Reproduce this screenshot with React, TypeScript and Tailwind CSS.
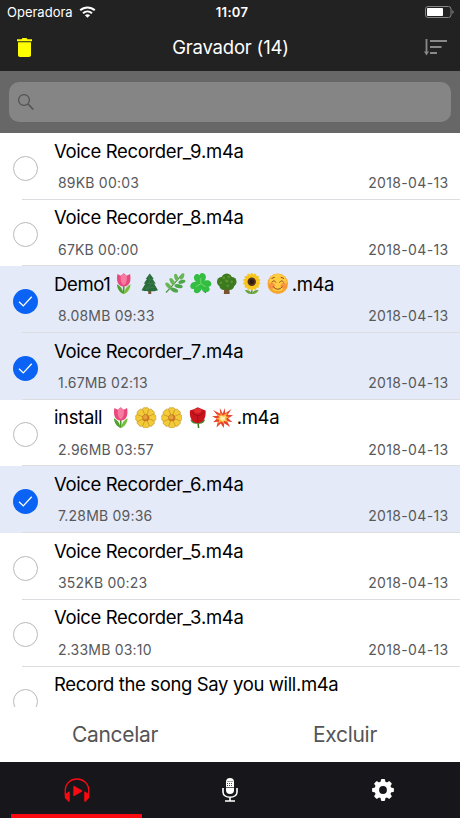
import clsx from 'clsx';
import React from 'react';

type EmojiName =
  | 'tulip' | 'evergreen' | 'herb' | 'shamrock' | 'tree' | 'sunflower'
  | 'smile' | 'blossom' | 'rose' | 'boom';

type Recording = {
  name: string;
  emojis?: EmojiName[];
  ext: string;
  details?: string;
  date?: string;
  selected?: boolean;
};

const recordings: Recording[] = [
  { name: 'Voice Recorder_9', ext: '.m4a', details: '89KB 00:03', date: '2018-04-13' },
  { name: 'Voice Recorder_8', ext: '.m4a', details: '67KB 00:00', date: '2018-04-13' },
  {
    name: 'Demo1',
    emojis: ['tulip', 'evergreen', 'herb', 'shamrock', 'tree', 'sunflower', 'smile'],
    ext: '.m4a',
    details: '8.08MB 09:33',
    date: '2018-04-13',
    selected: true,
  },
  { name: 'Voice Recorder_7', ext: '.m4a', details: '1.67MB 02:13', date: '2018-04-13', selected: true },
  {
    name: 'install ',
    emojis: ['tulip', 'blossom', 'blossom', 'rose', 'boom'],
    ext: '.m4a',
    details: '2.96MB 03:57',
    date: '2018-04-13',
  },
  { name: 'Voice Recorder_6', ext: '.m4a', details: '7.28MB 09:36', date: '2018-04-13', selected: true },
  { name: 'Voice Recorder_5', ext: '.m4a', details: '352KB 00:23', date: '2018-04-13' },
  { name: 'Voice Recorder_3', ext: '.m4a', details: '2.33MB 03:10', date: '2018-04-13' },
  { name: 'Record the song Say you will', ext: '.m4a' },
];

const around = (count: number) => Array.from({ length: count }, (_, i) => (i * 360) / count);

const emojiArt: Record<EmojiName, React.ReactNode> = {
  tulip: (
    <>
      <path d="M11 11v10" stroke="#4c9a2a" strokeWidth="1.6" />
      <path d="M11 21.5C7 20 4.5 17 4 11.5c3.500 1.500 6 5 7 10z" fill="#4fa02f" />
      <path d="M11 21.500c4-1.500 6.500-4.500 7-10-3.500 1.500-6 5-7 10z" fill="#78bd3c" />
      <path d="M4.500 1l3.500 1.800L11 .3l3 2.500L17.500 1c1 6 .5 12.500-6.500 12.800C4 13.500 3.500 7 4.500 1z" fill="#e8487c" />
      <path d="M8 3c-.8 4 .5 8 3 9.500C13.500 11 14.800 7 14 3l-3-2.500z" fill="#f77ba3" />
    </>
  ),
  evergreen: (
    <>
      <path d="M9.500 17h3v4.500h-3z" fill="#795032" />
      <path d="M11 .5l4.200 5.700-1.500-.2 3.500 5-1.800-.3 4 7c-4 1.600-12.800 1.600-16.800 0l4-7-1.800.3 3.500-5-1.500.2z" fill="#286b3c" />
      <path d="M11 2l-1 5 3-1-4 5 6-1-8 6 10-2" fill="none" stroke="#3f8048" strokeWidth=".8" />
    </>
  ),
  herb: (
    <>
      <path d="M2 20C7 15 12 9 18 2" fill="none" stroke="#4d9642" strokeWidth="1.300" />
      <g fill="#69b657">
        <ellipse cx="18.500" cy="3.500" rx="1.900" ry="3.500" transform="rotate(25 18.500 3.500)" />
        <ellipse cx="12.500" cy="4.500" rx="1.900" ry="3.800" transform="rotate(-15 12.500 4.500)" />
        <ellipse cx="8.300" cy="8.700" rx="2" ry="4" transform="rotate(-30 8.300 8.700)" />
        <ellipse cx="4.500" cy="13" rx="2" ry="4" transform="rotate(-42 4.500 13)" />
      </g>
      <g fill="#4da649">
        <ellipse cx="18.300" cy="9" rx="1.900" ry="3.700" transform="rotate(75 18.300 9)" />
        <ellipse cx="15" cy="13.500" rx="2" ry="4.200" transform="rotate(100 15 13.500)" />
        <ellipse cx="10.500" cy="17.500" rx="2" ry="4.200" transform="rotate(112 10.500 17.500)" />
      </g>
    </>
  ),
  shamrock: (
    <>
      <path d="M10.500 11c1 4 3 7 6 9" fill="none" stroke="#219c35" strokeWidth="1.800" />
      {[-8, 112, 232].map((angle) => (
        <path
          key={angle}
          transform={`rotate(${angle} 11 11)`}
          d="M11 12C6 9.500 3.500 5 5.700 2 7.500-.3 10 .5 11 2.500 12-.5 15-.3 16.500 2 18.500 5 16 9.500 11 12z"
          fill="#33bd43"
        />
      ))}
      <path d="M11 11V5M11 11l5 3M11 11l-5 3" stroke="#83df6d" strokeWidth=".8" />
    </>
  ),
  tree: (
    <>
      <path d="M8.500 14h5l.5 7.500H8z" fill="#775431" />
      <g fill="#3b7a1f">
        <circle cx="11" cy="6" r="5.500" />
        <circle cx="6" cy="9" r="5" />
        <circle cx="16" cy="9" r="5" />
        <circle cx="8" cy="13" r="4.500" />
        <circle cx="14" cy="13" r="4.500" />
      </g>
      <g fill="#5c902d">
        <circle cx="8" cy="5" r="1.500" />
        <circle cx="13" cy="4" r="1.500" />
        <circle cx="11" cy="8" r="1.700" />
        <circle cx="5" cy="10" r="1.400" />
        <circle cx="16" cy="9" r="1.400" />
        <circle cx="12" cy="13" r="1.300" />
      </g>
    </>
  ),
  sunflower: (
    <>
      <path d="M11 13v8.500" stroke="#549539" strokeWidth="1.600" />
      <path d="M11 21.500c-4 .3-6-1.500-7-4 4-.3 6 1 7 4zM11 21.500c4 .3 6-1.500 7-4-4-.3-6 1-7 4z" fill="#6aa63d" />
      {around(14).map((angle) => (
        <ellipse key={angle} cx="11" cy="3.200" rx="1.700" ry="3.200" fill="#f8c51d" transform={`rotate(${angle} 11 9)`} />
      ))}
      <circle cx="11" cy="9" r="4.300" fill="#54301a" />
      <circle cx="11" cy="9" r="2.300" fill="#301b12" />
    </>
  ),
  smile: (
    <>
      <circle cx="11" cy="11" r="10.500" fill="#f6a52d" />
      <circle cx="11" cy="9.800" r="9" fill="#ffcc42" />
      <circle cx="5" cy="13" r="3" fill="#f58243" opacity=".75" />
      <circle cx="17" cy="13" r="3" fill="#f58243" opacity=".75" />
      <path d="M5 9.500c1-2 3-2 4 0M13 9.500c1-2 3-2 4 0M6.500 14c2 3.500 7 3.500 9 0M5 5.500l2.500-1M17 5.500l-2.500-1" fill="none" stroke="#83491e" strokeWidth="1" strokeLinecap="round" />
    </>
  ),
  blossom: (
    <>
      {around(8).map((angle) => (
        <path
          key={angle}
          d="M11 11L7.500 3.500C7.500.5 10 .2 11 1c1-.8 3.500-.5 3.500 2.500z"
          fill="#f3ca37"
          stroke="#b98a22"
          strokeWidth=".6"
          transform={`rotate(${angle} 11 11)`}
        />
      ))}
      <circle cx="11" cy="11" r="3.600" fill="#c9761e" />
      <circle cx="10.500" cy="10.500" r="2.300" fill="#e5a33c" />
    </>
  ),
  rose: (
    <>
      <path d="M11 13c.5 3 .3 6 1 8.500" fill="none" stroke="#3c7c2d" strokeWidth="1.600" />
      <path d="M11 17c-4 1-6.500-1-7.500-4 4-.5 6.500.5 7.500 4zM11 17c4 1 6.500-1 7.500-4-4-.5-6.500.5-7.500 4z" fill="#478a31" />
      <path d="M3 3.500L7.500 2 11 .2 15 2l4 1.500c.5 6-1 12.500-8 13C4 16 2.500 9.500 3 3.500z" fill="#c9141d" />
      <path d="M7 3.500c2-3 6-3 8 0-1 4-7 4-8 0z" fill="#e32e31" />
      <path d="M5 5c3 5 9 5 12 0M11 8.500v7" fill="none" stroke="#9b0d18" strokeWidth=".8" />
    </>
  ),
  boom: (
    <>
      <path d="M11 7L8 1l.5 6L1 3l5 6-6 .5 5 2.500-4 3.500 5-.5-1.500 6L9 17l3 4.500.5-5 6 4-3-6 5.500 1-4.500-4 5-3-5.500-.5L20 2l-6.500 4.500L13 1z" fill="#e8422a" />
      <path d="M11 9L9 6l-.5 3L5 7l2.500 3.500L4 12l3.500 1-1.500 4 4-2.500 2 3 .5-3.500 4 1.500-2-3.500 3-2-3.500-.5L16 6l-4 2z" fill="#ffb23e" />
      <path d="M10.500 9.500L8 9l1 2-2 1.500 2.500.5.5 2 1.500-1.500 2.500.5-1-2.500 1.500-2-2.500.5z" fill="#fff2a5" />
    </>
  ),
};

const Emoji = ({ name }: { name: EmojiName }) => (
  <svg viewBox="0 0 22 22" role="img" aria-label={name} className="w-[21.5px] h-[21.5px] shrink-0">
    {emojiArt[name]}
  </svg>
);

const StatusBar = () => (
  <div className="h-6 px-[7px] flex items-center text-[13px] leading-6">
    <div className="flex-1 flex items-center gap-[6px]">
      <span>Operadora</span>
      <svg viewBox="0 0 17 12" className="w-[17px] h-3" fill="none" stroke="white" strokeWidth="2">
        <path d="M1.200 4.300C5.300.4 11.700.4 15.800 4.300M4 7.200c2.600-2.300 6.400-2.300 9 0" />
        <path d="M8.500 11.700L5.900 9.200c1.500-1.300 3.700-1.300 5.200 0z" fill="white" stroke="none" />
      </svg>
    </div>
    <span className="pl-1 font-semibold tracking-[0.3px]">11:07</span>
    <div className="flex-1 flex justify-end">
      <svg viewBox="0 0 29 12" className="w-[29px] h-3 -mr-px">
        <rect x=".5" y=".5" width="25.500" height="11" rx="2.500" fill="none" stroke="#858585" />
        <rect x="2" y="2" width="16" height="8" rx=".8" fill="white" />
        <path d="M27.300 4v4c1.700-.7 1.700-3.300 0-4z" fill="#858585" />
      </svg>
    </div>
  </div>
);

const Header = () => (
  <header className="h-[71px] shrink-0 bg-[#222222] text-white">
    <StatusBar />
    <div className="h-[47px] pl-[17px] pr-[13px] flex items-center justify-between">
      <svg viewBox="0 0 15 19" className="w-[15px] h-[19px] -mt-px" fill="#ffff00">
        <path d="M0 1.200h4.500L5.500 0h4l1 1.200H15v2H0zM1 4.300h13V17c0 1.200-.8 2-2 2H3c-1.200 0-2-.8-2-2z" />
      </svg>
      <h1 className="text-[18.5px] font-normal pl-[5px] tracking-[-0.2px]">Gravador (14)</h1>
      <svg viewBox="0 0 23 17" className="w-[23px] h-[17px] -mt-px" fill="none" stroke="#898989" strokeWidth="1.800">
        <path d="M2.500 0v14M6 2h17M6 8h11.500M6 14h7" />
        <path d="M0 12.500h5l-2.500 4z" fill="#898989" stroke="none" />
      </svg>
    </div>
  </header>
);

const SearchBar = () => (
  <div className="h-[62px] shrink-0 px-[9px] pt-[11px] bg-[#676767]">
    <div className="h-10 rounded-[10px] bg-[#858585] flex items-center pl-[9px]">
      <svg viewBox="0 0 16 16" className="w-4 h-4" fill="none" stroke="#505050" strokeWidth="1.200">
        <circle cx="6" cy="6" r="5.400" />
        <path d="M10 10l5.300 5.500" strokeWidth="1.500" />
      </svg>
    </div>
  </div>
);

const Checkbox = ({ checked }: { checked?: boolean }) =>
  checked ? (
    <div className="w-[25px] h-[25px] rounded-full bg-[#0b63f6] flex items-center justify-center">
      <svg viewBox="0 0 15 11" className="w-[15px] h-[11px]" fill="none" stroke="white" strokeWidth="1.300">
        <path d="M1 5.700l4.300 4.200L13.700.8" />
      </svg>
    </div>
  ) : (
    <div className="w-[25px] h-[25px] rounded-full border border-[#b9b9bb]" />
  );

const RecordingRow = ({ recording }: { recording: Recording }) => (
  <li className={clsx('h-[66.7px] shrink-0 flex pl-[13px]', recording.selected && 'bg-[#e4eaf7]')}>
    <div className="pt-[22.5px]">
      <Checkbox checked={recording.selected} />
    </div>
    <div className="flex-1 -ml-4 pl-8 border-b border-[#dcdde0] text-black">
      <div className="h-6 mt-[5.5px] flex items-center text-[18.5px] leading-6 tracking-[-0.36px] whitespace-pre">
        <span>{recording.name}</span>
        {recording.emojis && (
          <span className="flex gap-[4.2px] pl-[2.5px] pr-[3px]">
            {recording.emojis.map((emoji, i) => (
              <Emoji key={i} name={emoji} />
            ))}
          </span>
        )}
        <span>{recording.ext}</span>
      </div>
      {recording.details && (
        <div className="mt-[10.5px] pl-1 pr-[11.5px] flex justify-between text-[14px] leading-5 text-[#58595c]">
          <span className="tracking-[0.2px]">{recording.details}</span>
          <span className="tracking-[0.35px]">{recording.date}</span>
        </div>
      )}
    </div>
  </li>
);

const ActionBar = () => (
  <div className="h-[55px] shrink-0 bg-white grid grid-cols-2 text-center text-[21px] leading-[55px] tracking-[-0.3px] text-[#555555]">
    <button>Cancelar</button>
    <button>Excluir</button>
  </div>
);

const TabBar = () => (
  <nav className="h-14 shrink-0 bg-[#17171b] grid grid-cols-3">
    <button className="flex flex-col items-center justify-between pt-4">
      <svg viewBox="0 0 26 24" className="w-[26px] h-6" fill="#f80a10">
        <path d="M1.200 17v-4C1.200-3 24.800-3 24.800 13v4" fill="none" stroke="#f80a10" strokeWidth="1.300" />
        <path d="M5.800 13.500v10H3.500V22C.2 21.500-.3 16 2.700 15c.9-.3.900-1.500 3.100-1.500zM20.200 13.500v10h2.300V22c3.300-.5 3.800-6 .8-7-.9-.3-.9-1.500-3.100-1.500z" />
        <path d="M9.300 8.500v9c0 .7.500.9 1 .6l7.500-4.300c.6-.3.6-1.100 0-1.500l-7.500-4.400c-.5-.3-1-.1-1 .6z" />
      </svg>
      <span className="w-[131px] h-1 bg-[#f80a10]" />
    </button>
    <button className="flex justify-center pt-4">
      <svg viewBox="0 0 16 24" className="w-4 h-6" fill="none" stroke="white">
        <rect x="4" y="0" width="8" height="16" rx="4" fill="white" stroke="none" />
        <path d="M1 10v4c0 7 14 7 14 0v-4M8 19v4M3 23h10" strokeWidth="1.600" />
        <path d="M5.500 3.500h5M5 5.500h6M5 7.500h6" stroke="#17171b" strokeWidth=".8" strokeDasharray="1 1" />
        <path d="M4 9.500h8" stroke="#17171b" strokeWidth=".7" />
      </svg>
    </button>
    <button className="flex justify-center pt-[17px]">
      <svg viewBox="0 0 22 22" className="w-[22px] h-[22px]">
        {around(8).map((angle) => (
          <path key={angle} d="M8.200 5L9 .8c.1-.5.4-.7.800-.7h2.400c.4 0 .7.2.8.7l.8 4.200z" fill="white" transform={`rotate(${angle} 11 11)`} />
        ))}
        <circle cx="11" cy="11" r="6.200" fill="none" stroke="white" strokeWidth="4.600" />
      </svg>
    </button>
  </nav>
);

export default function App() {
  return (
    <div className="w-full h-screen flex flex-col overflow-hidden bg-white text-white font-['Inter',sans-serif]">
      <Header />
      <SearchBar />
      <ul className="h-[574px] shrink-0 flex flex-col overflow-hidden">
        {recordings.map((recording) => (
          <RecordingRow key={recording.name} recording={recording} />
        ))}
      </ul>
      <ActionBar />
      <TabBar />
    </div>
  );
}
